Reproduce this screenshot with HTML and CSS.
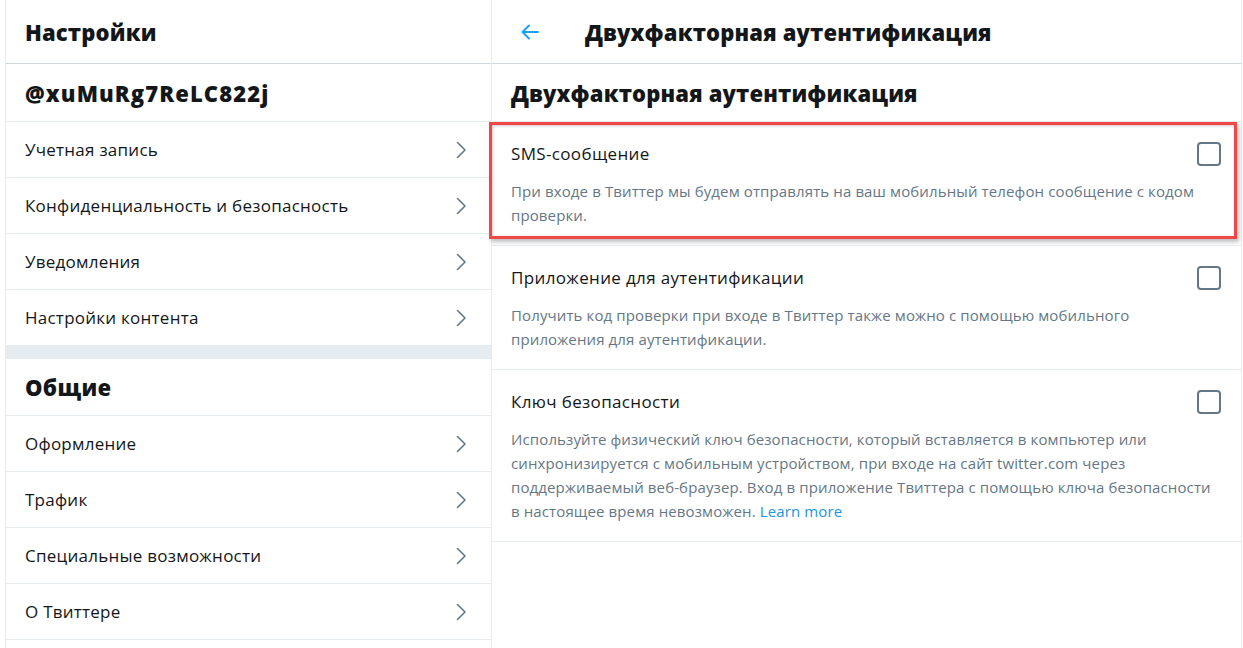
FILE: index.html
```html
<!DOCTYPE html>
<html lang="ru">
<head>
<meta charset="utf-8">
<title>Настройки</title>
<link rel="stylesheet" href="styles.css">
</head>
<body>
<div class="page">
  <aside class="left">
    <header class="col-head"><h1>Настройки</h1></header>
    <div class="section-title handle">@xuMuRg7ReLC822j</div>
    <a class="row">Учетная запись<svg class="chev" viewBox="0 0 24 24"><path d="M8.5 4.5l7.5 7.5-7.5 7.5"/></svg></a>
    <a class="row">Конфиденциальность и безопасность<svg class="chev" viewBox="0 0 24 24"><path d="M8.5 4.5l7.5 7.5-7.5 7.5"/></svg></a>
    <a class="row">Уведомления<svg class="chev" viewBox="0 0 24 24"><path d="M8.5 4.5l7.5 7.5-7.5 7.5"/></svg></a>
    <a class="row">Настройки контента<svg class="chev" viewBox="0 0 24 24"><path d="M8.5 4.5l7.5 7.5-7.5 7.5"/></svg></a>
    <div class="band"></div>
    <div class="section-title general">Общие</div>
    <a class="row">Оформление<svg class="chev" viewBox="0 0 24 24"><path d="M8.5 4.5l7.5 7.5-7.5 7.5"/></svg></a>
    <a class="row">Трафик<svg class="chev" viewBox="0 0 24 24"><path d="M8.5 4.5l7.5 7.5-7.5 7.5"/></svg></a>
    <a class="row">Специальные возможности<svg class="chev" viewBox="0 0 24 24"><path d="M8.5 4.5l7.5 7.5-7.5 7.5"/></svg></a>
    <a class="row">О Твиттере<svg class="chev" viewBox="0 0 24 24"><path d="M8.5 4.5l7.5 7.5-7.5 7.5"/></svg></a>
  </aside>
  <main class="right">
    <header class="col-head right-head">
      <svg class="back" viewBox="0 0 24 24"><path d="M20 12H5M11 5.5L4.5 12 11 18.5"/></svg>
      <h1>Двухфакторная аутентификация</h1>
    </header>
    <div class="section-title">Двухфакторная аутентификация</div>
    <div class="option highlighted">
      <div class="opt-top"><span class="opt-title">SMS-сообщение</span><span class="box"></span></div>
      <p class="opt-desc">При входе в Твиттер мы будем отправлять на ваш мобильный телефон сообщение с кодом проверки.</p>
      <div class="mark"></div>
    </div>
    <div class="option">
      <div class="opt-top"><span class="opt-title">Приложение для аутентификации</span><span class="box"></span></div>
      <p class="opt-desc">Получить код проверки при входе в Твиттер также можно с помощью мобильного приложения для аутентификации.</p>
    </div>
    <div class="option">
      <div class="opt-top"><span class="opt-title">Ключ безопасности</span><span class="box"></span></div>
      <p class="opt-desc">Используйте физический ключ безопасности, который вставляется в компьютер или синхронизируется с мобильным устройством, при входе на сайт twitter.com через поддерживаемый веб-браузер. Вход в приложение Твиттера с помощью ключа безопасности в настоящее время невозможен. <a class="link">Learn more</a></p>
    </div>
  </main>
</div>
</body>
</html>
```

FILE: styles.css
```css
* { box-sizing: border-box; }
html, body { margin: 0; background: #fff; }
body {
  font-family: "Open Sans", "Noto Sans", "Liberation Sans", sans-serif;
  color: #14171a;
  height: 648px;
  overflow: hidden;
}
.page {
  display: flex;
  padding-left: 5px;
  height: 648px;
}
.left {
  width: 487px;
  flex: none;
  border-left: 1px solid #e6ecf0;
  border-right: 1px solid #e6ecf0;
  display: flex;
  flex-direction: column;
}
.right {
  width: 750px;
  flex: none;
  border-right: 1px solid #e6ecf0;
  display: flex;
  flex-direction: column;
}
.col-head {
  height: 64px;
  border-bottom: 1px solid #ccd6dd;
  display: flex;
  align-items: center;
  padding: 0 19px;
  flex: none;
}
.col-head h1 {
  margin: 0;
  font-size: 22px;
  font-weight: 800;
  letter-spacing: 0.15px;
  line-height: 28px;
}
.right-head { padding-left: 26px; }
.back {
  width: 24px;
  height: 24px;
  margin-right: 43px;
  fill: none;
  stroke: #1da1f2;
  stroke-width: 2;
  stroke-linecap: round;
  stroke-linejoin: round;
}
.section-title {
  height: 58px;
  flex: none;
  border-bottom: 1px solid #e6ecf0;
  display: flex;
  align-items: center;
  padding: 0 19px;
  font-size: 22px;
  font-weight: 800;
  letter-spacing: 0.15px;
}
.section-title.handle { letter-spacing: 1.1px; }
.section-title.general { height: 57px; letter-spacing: 0.3px; }
.row {
  height: 56px;
  flex: none;
  border-bottom: 1px solid #e6ecf0;
  display: flex;
  align-items: center;
  justify-content: space-between;
  padding: 0 18px 0 19px;
  font-size: 17px;
  letter-spacing: 0.25px;
  color: #14171a;
}
.chev {
  width: 24px;
  height: 24px;
  fill: none;
  stroke: #657786;
  stroke-width: 1.6;
  stroke-linecap: round;
  stroke-linejoin: round;
}
.band {
  height: 13px;
  flex: none;
  background: #e6ecf0;
}
.option {
  position: relative;
  padding: 20px 20px 18px 19px;
  border-bottom: 1px solid #e6ecf0;
}
.opt-top {
  display: flex;
  align-items: center;
  justify-content: space-between;
  height: 24px;
}
.opt-title {
  font-size: 17px;
  letter-spacing: 0.35px;
  line-height: 24px;
}
.box {
  width: 24px;
  height: 24px;
  border: 2px solid #657786;
  border-radius: 4px;
  flex: none;
}
.opt-desc {
  margin: 13px 0 0;
  font-size: 15px;
  letter-spacing: 0.12px;
  line-height: 24px;
  color: #657786;
  padding-right: 0;
}
.link { color: #1b95e0; }
.mark {
  position: absolute;
  left: -3px;
  top: 0;
  width: 748px;
  height: 117px;
  border: 3px solid #f04848;
  box-shadow: 2px 3px 4px rgba(0,0,0,0.25), inset 1px 1px 3px rgba(0,0,0,0.2);
  pointer-events: none;
}
```
